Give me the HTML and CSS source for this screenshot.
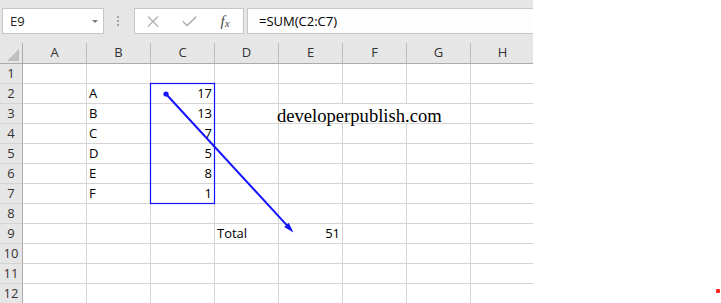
FILE: index.html
```html
<!DOCTYPE html>
<html lang="en">
<head>
    <meta charset="UTF-8">
    <title>SUM formula</title>
    <link rel="stylesheet" href="styles.css">
</head>
<body>
    <div class="excel">
        <div class="toolbar">
            <div class="name-box"><span>E9</span><span class="caret"></span></div>
            <div class="grip"><i></i><i></i><i></i></div>
            <div class="fx-buttons">
                <span>
                    <svg width="12" height="11" viewBox="0 0 12 11"><path d="M1 0.5L11 10.5M11 0.5L1 10.5" stroke="#b4b4b4" stroke-width="1.4" fill="none"/></svg>
                </span>
                <span>
                    <svg width="15" height="11" viewBox="0 0 15 11"><path d="M0.7 5.3L5 9.6L14.3 0.6" stroke="#b4b4b4" stroke-width="1.6" fill="none"/></svg>
                </span>
                <span class="fx"><i>f</i><i class="x">x</i></span>
            </div>
            <div class="formula">=SUM(C2:C7)</div>
        </div>

        <div class="sheet">
            <div class="row head">
                <div class="corner"><span></span></div>
                <div class="col">A</div><div class="col">B</div><div class="col">C</div><div class="col">D</div>
                <div class="col">E</div><div class="col">F</div><div class="col">G</div><div class="col">H</div>
            </div>
            <div class="row">
                <div class="num">1</div>
                <div class="cell"></div><div class="cell"></div><div class="cell"></div><div class="cell"></div>
                <div class="cell"></div><div class="cell"></div><div class="cell"></div><div class="cell"></div>
            </div>
            <div class="row">
                <div class="num">2</div>
                <div class="cell"></div><div class="cell">A</div><div class="cell r">17</div><div class="cell"></div>
                <div class="cell"></div><div class="cell"></div><div class="cell"></div><div class="cell"></div>
            </div>
            <div class="row">
                <div class="num">3</div>
                <div class="cell"></div><div class="cell">B</div><div class="cell r">13</div><div class="cell"></div>
                <div class="cell span3"><span class="site">developerpublish.com</span></div><div class="cell"></div>
            </div>
            <div class="row">
                <div class="num">4</div>
                <div class="cell"></div><div class="cell">C</div><div class="cell r">7</div><div class="cell"></div>
                <div class="cell"></div><div class="cell"></div><div class="cell"></div><div class="cell"></div>
            </div>
            <div class="row">
                <div class="num">5</div>
                <div class="cell"></div><div class="cell">D</div><div class="cell r">5</div><div class="cell"></div>
                <div class="cell"></div><div class="cell"></div><div class="cell"></div><div class="cell"></div>
            </div>
            <div class="row">
                <div class="num">6</div>
                <div class="cell"></div><div class="cell">E</div><div class="cell r">8</div><div class="cell"></div>
                <div class="cell"></div><div class="cell"></div><div class="cell"></div><div class="cell"></div>
            </div>
            <div class="row">
                <div class="num">7</div>
                <div class="cell"></div><div class="cell">F</div><div class="cell r">1</div><div class="cell"></div>
                <div class="cell"></div><div class="cell"></div><div class="cell"></div><div class="cell"></div>
            </div>
            <div class="row">
                <div class="num">8</div>
                <div class="cell"></div><div class="cell"></div><div class="cell"></div><div class="cell"></div>
                <div class="cell"></div><div class="cell"></div><div class="cell"></div><div class="cell"></div>
            </div>
            <div class="row">
                <div class="num">9</div>
                <div class="cell"></div><div class="cell"></div><div class="cell"></div><div class="cell">Total</div>
                <div class="cell r">51</div><div class="cell"></div><div class="cell"></div><div class="cell"></div>
            </div>
            <div class="row">
                <div class="num">10</div>
                <div class="cell"></div><div class="cell"></div><div class="cell"></div><div class="cell"></div>
                <div class="cell"></div><div class="cell"></div><div class="cell"></div><div class="cell"></div>
            </div>
            <div class="row">
                <div class="num">11</div>
                <div class="cell"></div><div class="cell"></div><div class="cell"></div><div class="cell"></div>
                <div class="cell"></div><div class="cell"></div><div class="cell"></div><div class="cell"></div>
            </div>
            <div class="row">
                <div class="num">12</div>
                <div class="cell"></div><div class="cell"></div><div class="cell"></div><div class="cell"></div>
                <div class="cell"></div><div class="cell"></div><div class="cell"></div><div class="cell"></div>
            </div>
        </div>

        <!-- selection box and arrow drawn over the grid -->
        <svg class="overlay" width="533" height="303" viewBox="0 0 533 303">
            <rect x="150.5" y="83.5" width="64" height="120" fill="none" stroke="#1010ff" stroke-width="1.2"/>
            <line x1="166" y1="94" x2="287" y2="225.4" stroke="#1414ff" stroke-width="2"/>
            <circle cx="166" cy="94" r="2.6" fill="#1414ff"/>
            <polygon points="293.5,232.5 284.2,226.9 288.7,222.8" fill="#1414ff"/>
        </svg>
    </div>

    <span class="dot"></span>
</body>
</html>
```

FILE: styles.css
```css
body {
    margin: 0;
    background: #fff;
    font-family: "Open Sans", "Noto Sans", sans-serif;
    font-size: 13px;
    color: #000;
    overflow: hidden;
}
.excel {
    position: relative;
    width: 533px;
    height: 303px;
    overflow: hidden;
    background: #e6e6e6;
}

/* formula bar */
.toolbar {
    display: flex;
    align-items: flex-start;
    height: 43px;
    padding-top: 8px;
    box-sizing: border-box;
}
.name-box {
    display: flex;
    align-items: center;
    justify-content: space-between;
    width: 102px;
    height: 26px;
    margin-left: 2px;
    padding: 0 5px 0 7px;
    box-sizing: border-box;
    border: 1px solid #c6c6c6;
    background: #fff;
    line-height: 24px;
    color: #222;
}
.caret {
    width: 0;
    height: 0;
    border-left: 3px solid transparent;
    border-right: 3px solid transparent;
    border-top: 3px solid #7a7a7a;
}
.grip {
    display: flex;
    flex-direction: column;
    gap: 2px;
    margin: 8px 15px 0 13px;
}
.grip i {
    display: block;
    width: 2px;
    height: 2px;
    background: #a3a3a3;
}
.fx-buttons {
    display: flex;
    width: 110px;
    height: 26px;
    box-sizing: border-box;
    border: 1px solid #c6c6c6;
    background: #fff;
}
.fx-buttons span {
    width: 36px;
    display: flex;
    align-items: center;
    justify-content: center;
}
.fx-buttons svg {
    display: block;
}
.fx {
    font-family: "Liberation Serif", serif;
    color: #4a4a4a;
    line-height: 24px;
}
.fx i {
    font-size: 15px;
}
.fx .x {
    font-size: 11px;
    position: relative;
    top: 2px;
}
.formula {
    flex: 1;
    height: 26px;
    margin-left: 3px;
    padding-left: 11px;
    box-sizing: border-box;
    border: 1px solid #c6c6c6;
    border-right: 0;
    background: #fdfdfd;
    line-height: 24px;
    white-space: nowrap;
}

/* grid */
.sheet {
    background: #fff;
}
.row {
    display: flex;
    height: 20px;
}
.row.head {
    height: 21px;
    background: #e6e6e6;
}
.cell, .col, .num, .corner {
    flex: none;
    box-sizing: border-box;
    width: 64px;
    border-right: 1px solid #d4d4d4;
    border-bottom: 1px solid #d4d4d4;
    line-height: 19px;
    padding: 0 2px;
    white-space: nowrap;
}
.cell.r {
    text-align: right;
}
.cell.span3 {
    width: 192px;
    padding-left: 0;
}
.site {
    display: block;
    font-family: "Liberation Serif", "Times New Roman", serif;
    font-size: 18.6px;
    line-height: 23.4px;
    margin-left: -2px;
}
.col {
    text-align: center;
    color: #333;
    border-right-color: #bdbdbd;
    border-bottom-color: #ababab;
}
.corner {
    width: 23px;
    padding: 0;
    display: flex;
    justify-content: flex-end;
    align-items: flex-end;
    border-right-color: #ababab;
    border-bottom-color: #ababab;
}
.corner span {
    width: 0;
    height: 0;
    margin: 0 3px 2px 0;
    border-left: 12px solid transparent;
    border-bottom: 12px solid #bfbfbf;
}
.num {
    width: 23px;
    padding: 0;
    text-align: center;
    color: #333;
    background: #e6e6e6;
    border-right-color: #ababab;
}

.overlay {
    position: absolute;
    top: 0;
    left: 0;
    pointer-events: none;
}
.dot {
    position: absolute;
    left: 716px;
    top: 289px;
    width: 4px;
    height: 4px;
    border-radius: 1px;
    background: #f22;
}
```
